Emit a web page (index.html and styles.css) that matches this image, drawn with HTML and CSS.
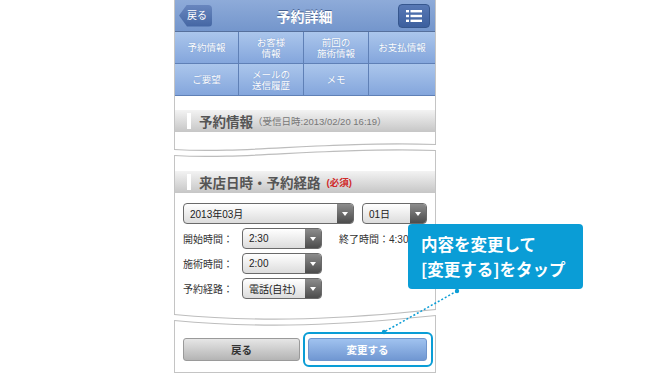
FILE: index.html
```html
<!DOCTYPE html>
<html lang="ja">
<head>
    <meta charset="UTF-8">
    <title>予約詳細</title>
    <link rel="stylesheet" href="styles.css">
</head>
<body>
    <div class="stage">
        <div class="phone">
            <div class="top">
                <div class="topbar">
                    <div class="bar-left"><span class="back-btn">戻る</span></div>
                    <h1 class="title">予約詳細</h1>
                    <div class="bar-right">
                        <span class="menu-btn">
                            <svg width="16" height="12" viewBox="0 0 16 12">
                                <rect x="0" y="0" width="3" height="2.4" fill="#fff"/>
                                <rect x="4.5" y="0" width="11.5" height="2.4" fill="#fff"/>
                                <rect x="0" y="4.8" width="3" height="2.4" fill="#fff"/>
                                <rect x="4.5" y="4.8" width="11.5" height="2.4" fill="#fff"/>
                                <rect x="0" y="9.6" width="3" height="2.4" fill="#fff"/>
                                <rect x="4.5" y="9.6" width="11.5" height="2.4" fill="#fff"/>
                            </svg>
                        </span>
                    </div>
                </div>
                <div class="tabs">
                    <div class="tab">予約情報</div>
                    <div class="tab">お客様<br>情報</div>
                    <div class="tab">前回の<br>施術情報</div>
                    <div class="tab">お支払情報</div>
                    <div class="tab">ご要望</div>
                    <div class="tab">メールの<br>送信履歴</div>
                    <div class="tab">メモ</div>
                    <div class="tab"></div>
                </div>
            </div>

            <div class="panel panel-info">
                <div class="sec-bar">
                    <span class="mark"></span>
                    <span class="sec-title">予約情報</span>
                    <span class="sec-note">（受信日時:2013/02/20 16:19）</span>
                </div>
            </div>

            <svg class="tear" width="262" height="18" viewBox="0 0 262 18">
                <path d="M0.5 0 V7.5 M261.5 0 V2.5" stroke="#c4c4c4" fill="none"/>
                <path d="M0 7.5 C70 12, 150 -1, 262 2.5" stroke="#bdbdbd" stroke-width="1.2" fill="none"/>
                <path d="M0 13.5 C70 18, 150 5, 262 8.5" stroke="#bdbdbd" stroke-width="1.2" fill="none"/>
                <path d="M0.5 13.5 V18 M261.5 8.5 V18" stroke="#c4c4c4" fill="none"/>
            </svg>

            <div class="panel panel-form">
                <div class="sec-bar">
                    <span class="mark"></span>
                    <span class="sec-title">来店日時・予約経路</span>
                    <span class="sec-req">(必須)</span>
                </div>
                <div class="form">
                    <div class="row">
                        <span class="select w-month">2013年03月<i class="arrow"></i></span>
                        <span class="select w-day">01日<i class="arrow"></i></span>
                    </div>
                    <div class="row">
                        <span class="label">開始時間：</span>
                        <span class="select w-time">2:30<i class="arrow"></i></span>
                        <span class="end-time">終了時間：4:30</span>
                    </div>
                    <div class="row">
                        <span class="label">施術時間：</span>
                        <span class="select w-time">2:00<i class="arrow"></i></span>
                    </div>
                    <div class="row">
                        <span class="label">予約経路：</span>
                        <span class="select w-time">電話(自社)<i class="arrow"></i></span>
                    </div>
                </div>
            </div>

            <svg class="tear" width="262" height="18" viewBox="0 0 262 18">
                <path d="M0.5 0 V5.5 M261.5 0 V0.5" stroke="#c4c4c4" fill="none"/>
                <path d="M0 5.5 C90 14, 170 10, 262 0.5" stroke="#bdbdbd" stroke-width="1.2" fill="none"/>
                <path d="M0 11.5 C90 20, 170 16, 262 6.5" stroke="#bdbdbd" stroke-width="1.2" fill="none"/>
                <path d="M0.5 11.5 V18 M261.5 6.5 V18" stroke="#c4c4c4" fill="none"/>
            </svg>

            <div class="panel panel-actions">
                <span class="btn btn-back">戻る</span>
                <span class="focus-ring"><span class="btn btn-submit">変更する</span></span>
            </div>
        </div>

        <div class="callout">内容を変更して<br>[変更する]をタップ</div>
        <svg class="leader" width="670" height="390" viewBox="0 0 670 390">
            <line x1="457" y1="291" x2="384" y2="332" stroke="#0a9dd6" stroke-width="1.5" stroke-dasharray="2 2"/>
            <circle cx="457" cy="291" r="2.2" fill="#0a9dd6"/>
            <circle cx="384" cy="332" r="2.2" fill="#0a9dd6"/>
        </svg>
    </div>
</body>
</html>
```

FILE: styles.css
```css
body {
    margin: 0;
    background-color: white;
    font-family: "Liberation Sans", "Noto Sans CJK JP", sans-serif;
    color: #333;
}

.stage {
    position: relative;
    width: 670px;
    height: 390px;
    overflow: hidden;
}

.phone {
    width: 262px;
    margin-left: 174px;
}

.top {
    border-left: 1px solid #c4c4c4;
    border-right: 1px solid #c4c4c4;
}

/* header bar */
.topbar {
    display: grid;
    grid-template-columns: 1fr auto 1fr;
    align-items: center;
    height: 31px;
    padding: 0 5px 0 4px;
    background: linear-gradient(#8eabd9, #7496cc);
    border-bottom: 1px solid #56709c;
}

.title {
    margin: 0;
    font-size: 14px;
    font-weight: bold;
    color: white;
    text-shadow: 0 -1px 0 #4a6391;
}

.back-btn {
    display: inline-block;
    width: 25px;
    height: 22px;
    padding-left: 8px;
    line-height: 22px;
    font-size: 10px;
    color: white;
    background: linear-gradient(#6886be, #4466a3);
    clip-path: polygon(8px 0, 100% 0, 100% 100%, 8px 100%, 0 50%);
    border-radius: 0 4px 4px 0;
}

.bar-right {
    display: flex;
    justify-content: flex-end;
}

.menu-btn {
    display: flex;
    align-items: center;
    justify-content: center;
    width: 30px;
    height: 22px;
    border: 1px solid #36578e;
    border-radius: 4px;
    background: linear-gradient(#5879b5, #3c5f9e);
}

/* tabs */
.tabs {
    display: grid;
    grid-template-columns: 64px 65px 65px 1fr;
    background: #5f80b6;
}

.tab {
    display: flex;
    align-items: center;
    justify-content: center;
    height: 31px;
    border-bottom: 1px solid #5f80b6;
    border-right: 1px solid #5f80b6;
    background: linear-gradient(#abc6ec, #84a6dc);
    font-size: 9.5px;
    line-height: 11px;
    text-align: center;
    color: white;
    text-shadow: 0 0 1px #6e8fc4;
}

.tab:nth-child(4n) {
    border-right: none;
}

/* panels */
.panel {
    border-left: 1px solid #c4c4c4;
    border-right: 1px solid #c4c4c4;
}

.panel-info {
    padding: 14px 0 10px;
}

.panel-form {
    padding: 11px 0 10px;
}

.tear {
    display: block;
}

.sec-bar {
    display: flex;
    align-items: center;
    height: 22px;
    background: linear-gradient(#f3f3f3, #c6c6c6);
}

.mark {
    width: 4px;
    height: 16px;
    margin: 0 8px 0 12px;
    background: white;
}

.sec-title {
    font-size: 13.5px;
    font-weight: bold;
    color: #555;
}

.sec-note {
    font-size: 9.5px;
    color: #777;
}

.sec-req {
    margin-left: 6px;
    font-size: 9.5px;
    font-weight: bold;
    color: #d02a2a;
}

/* form */
.form {
    display: flex;
    flex-direction: column;
    gap: 4px;
    padding: 10px 8px 0;
}

.row {
    display: flex;
    align-items: center;
    height: 21px;
}

.label {
    width: 59px;
    font-size: 10px;
    color: #333;
}

.select {
    position: relative;
    display: flex;
    align-items: center;
    box-sizing: border-box;
    height: 21px;
    padding-left: 6px;
    border: 1px solid #6a6a6a;
    border-radius: 4px;
    background: linear-gradient(#ffffff, #dcdcdc);
    font-size: 10px;
    color: #222;
}

.arrow {
    position: absolute;
    top: 0;
    right: 0;
    bottom: 0;
    width: 16px;
    border-radius: 0 3px 3px 0;
    background: linear-gradient(#8c8c8c, #4c4c4c);
}

.arrow::after {
    content: "";
    position: absolute;
    left: 5px;
    top: 8px;
    border-left: 3px solid transparent;
    border-right: 3px solid transparent;
    border-top: 4px solid white;
}

.w-month {
    width: 171px;
    margin-right: 8px;
}

.w-day {
    width: 65px;
}

.w-time {
    width: 80px;
}

.end-time {
    margin-left: 17px;
    font-size: 10px;
    color: #333;
}

/* actions */
.panel-actions {
    display: flex;
    align-items: center;
    gap: 3px;
    padding: 5px 2px 5px 8px;
    border-bottom: 1px solid #c4c4c4;
}

.btn {
    display: flex;
    align-items: center;
    justify-content: center;
    box-sizing: border-box;
    height: 23px;
    border-radius: 3px;
    font-size: 10.5px;
    font-weight: bold;
}

.btn-back {
    width: 117px;
    border: 1px solid #9a9a9a;
    background: linear-gradient(#e6e6e6, #b4b4b4);
    color: #333;
}

.focus-ring {
    display: block;
    padding: 4px 4px 4px 3px;
    border: 2px solid #0a9dd6;
    border-radius: 6px;
}

.btn-submit {
    width: 119px;
    border: 1px solid #6f94cc;
    background: linear-gradient(#a0c2ef, #7097d2);
    color: white;
}

/* annotation */
.callout {
    position: absolute;
    left: 408px;
    top: 224px;
    width: 175px;
    height: 65px;
    box-sizing: border-box;
    padding: 8px 0 0 13px;
    border-radius: 4px;
    background: #0a9dd6;
    color: white;
    font-family: "Noto Sans CJK JP", sans-serif;
    font-size: 16.5px;
    font-weight: bold;
    line-height: 25px;
}

.leader {
    position: absolute;
    left: 0;
    top: 0;
}
```
